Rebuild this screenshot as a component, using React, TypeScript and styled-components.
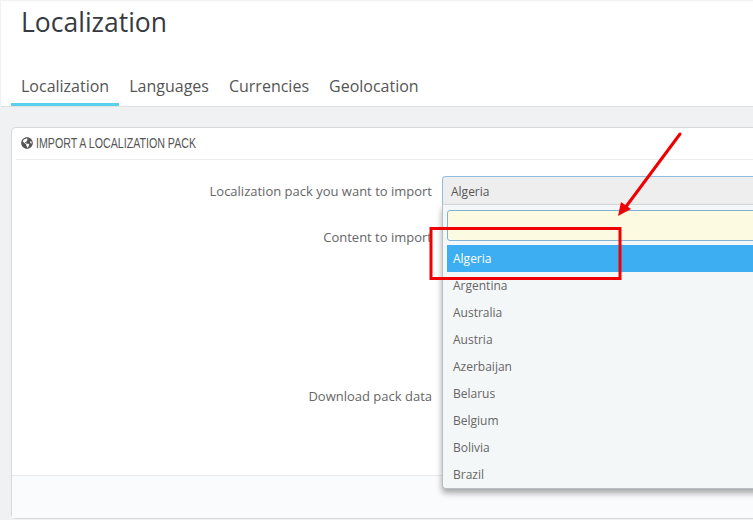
import React from 'react'
import styled, { createGlobalStyle } from 'styled-components'
import { FaGlobeAmericas } from 'react-icons/fa'

const countries = ['Algeria', 'Argentina', 'Australia', 'Austria', 'Azerbaijan', 'Belarus', 'Belgium', 'Bolivia', 'Brazil']
const tabs = ['Localization', 'Languages', 'Currencies', 'Geolocation']

const GlobalStyle = createGlobalStyle`
  html, body {
    margin: 0;
    padding: 0;
    background: #eff1f2;
  }
  body {
    font-family: "Open Sans", "Liberation Sans", sans-serif;
    color: #666;
  }
`

const Page = styled.div`
  position: relative;
  width: 753px;
  height: 520px;
  overflow: hidden;
  background: #eff1f2;
`

const Header = styled.header`
  height: 105px;
  margin: 1px 0 0 1px;
  background: #fff;
  border-bottom: 1px solid #dfe1e3;
  display: flex;
  flex-direction: column;
  justify-content: space-between;
`

const Title = styled.h1`
  margin: 0;
  padding: 0 0 0 20px;
  font-size: 26.5px;
  line-height: 43px;
  font-weight: 400;
  color: #363a41;
`

const Tabs = styled.nav`
  display: flex;
  padding-left: 10px;
`

const Tab = styled.a<{ $active?: boolean }>`
  padding: 4px 10px 0;
  height: 29px;
  font-size: 16px;
  line-height: 24px;
  color: #555;
  border-bottom: 3px solid ${p => (p.$active ? '#5ad0ec' : 'transparent')};
`

const Panel = styled.section`
  margin: 20px -20px 0 11px;
  height: 390px;
  background: #fff;
  border: 1px solid #d3d8db;
  border-radius: 5px;
  display: flex;
  flex-direction: column;
`

const PanelHeading = styled.h3`
  margin: 0 4px;
  padding: 0 0 2px 5px;
  height: 29px;
  display: flex;
  align-items: center;
  gap: 3px;
  border-bottom: 1px solid #eeeeee;
  font-size: 14px;
  font-weight: 400;
  color: #555;
  svg {
    width: 12px;
    height: 12px;
  }
`

// no condensed face is installed, so the heading is squeezed to the reference width
const HeadingText = styled.span`
  font-family: "Liberation Sans", sans-serif;
  font-size: 14px;
  white-space: nowrap;
  transform: scaleX(0.76);
  transform-origin: left center;
`

const PanelBody = styled.div`
  flex: 1;
  padding-top: 16px;
  display: flex;
  flex-direction: column;
  gap: 17px;
`

const Row = styled.div<{ $height: number }>`
  display: grid;
  grid-template-columns: 420px 1fr;
  column-gap: 10px;
  height: ${p => p.$height}px;
`

const Label = styled.label<{ $lineHeight: number }>`
  height: 30px;
  text-align: right;
  font-size: 13px;
  line-height: ${p => p.$lineHeight}px;
  color: #666;
  white-space: nowrap;
`

const Field = styled.div`
  position: relative;
`

const SelectBox = styled.div`
  height: 27px;
  padding-left: 8px;
  background: #eeeeee;
  border: 1px solid #8fbfe0;
  border-bottom-color: #ddd;
  border-radius: 4px 0 0 0;
  font-size: 12px;
  line-height: 30px;
  color: #555;
`

const Menu = styled.div`
  position: absolute;
  z-index: 2;
  top: 29px;
  left: 0;
  right: 0;
  height: 284px;
  box-sizing: border-box;
  padding: 5px 4px 4px;
  background: #f4f7f8;
  border-left: 1px solid #b9bec2;
  border-bottom: 1px solid #b9bec2;
  border-radius: 0 0 0 4px;
  box-shadow: 0 4px 6px rgba(0, 0, 0, 0.35);
`

const SearchInput = styled.div`
  height: 29px;
  margin-bottom: 4px;
  background: #fdfae2;
  border: 1px solid #7fb2d6;
  border-radius: 3px 0 0 3px;
`

const Option = styled.div<{ $active?: boolean }>`
  height: 27px;
  padding-left: 6px;
  font-size: 12px;
  line-height: 27px;
  color: ${p => (p.$active ? '#fff' : '#666')};
  background: ${p => (p.$active ? '#3daef2' : 'transparent')};
`

const PanelFooter = styled.footer`
  height: 42px;
  background: #fafbfc;
  border-top: 1px solid #e8e8e8;
`

const Annotation = styled.svg`
  position: absolute;
  z-index: 3;
  top: 0;
  left: 0;
  pointer-events: none;
`

export default function App() {
  return (
    <Page>
      <GlobalStyle />
      <Header>
        <Title>Localization</Title>
        <Tabs>
          {tabs.map((t, i) => (
            <Tab key={t} $active={i === 0}>{t}</Tab>
          ))}
        </Tabs>
      </Header>
      <Panel>
        <PanelHeading>
          <FaGlobeAmericas />
          <HeadingText>IMPORT A LOCALIZATION PACK</HeadingText>
        </PanelHeading>
        <PanelBody>
          <Row $height={29}>
            <Label $lineHeight={30}>Localization pack you want to import</Label>
            <Field>
              <SelectBox>Algeria</SelectBox>
              <Menu>
                <SearchInput />
                {countries.map((c, i) => (
                  <Option key={c} $active={i === 0}>{c}</Option>
                ))}
              </Menu>
            </Field>
          </Row>
          <Row $height={142}>
            <Label $lineHeight={31}>Content to import</Label>
          </Row>
          <Row $height={30}>
            <Label $lineHeight={31}>Download pack data</Label>
          </Row>
        </PanelBody>
        <PanelFooter />
      </Panel>
      <Annotation width="753" height="520" viewBox="0 0 753 520">
        <rect x="431" y="228.5" width="189" height="50" fill="none" stroke="#f00000" strokeWidth="3" />
        <path d="M680 134 L625 208" fill="none" stroke="#f00000" strokeWidth="3" strokeLinecap="round" />
        <path d="M618 216 L621 202 L631 209 Z" fill="#f00000" />
      </Annotation>
    </Page>
  )
}
